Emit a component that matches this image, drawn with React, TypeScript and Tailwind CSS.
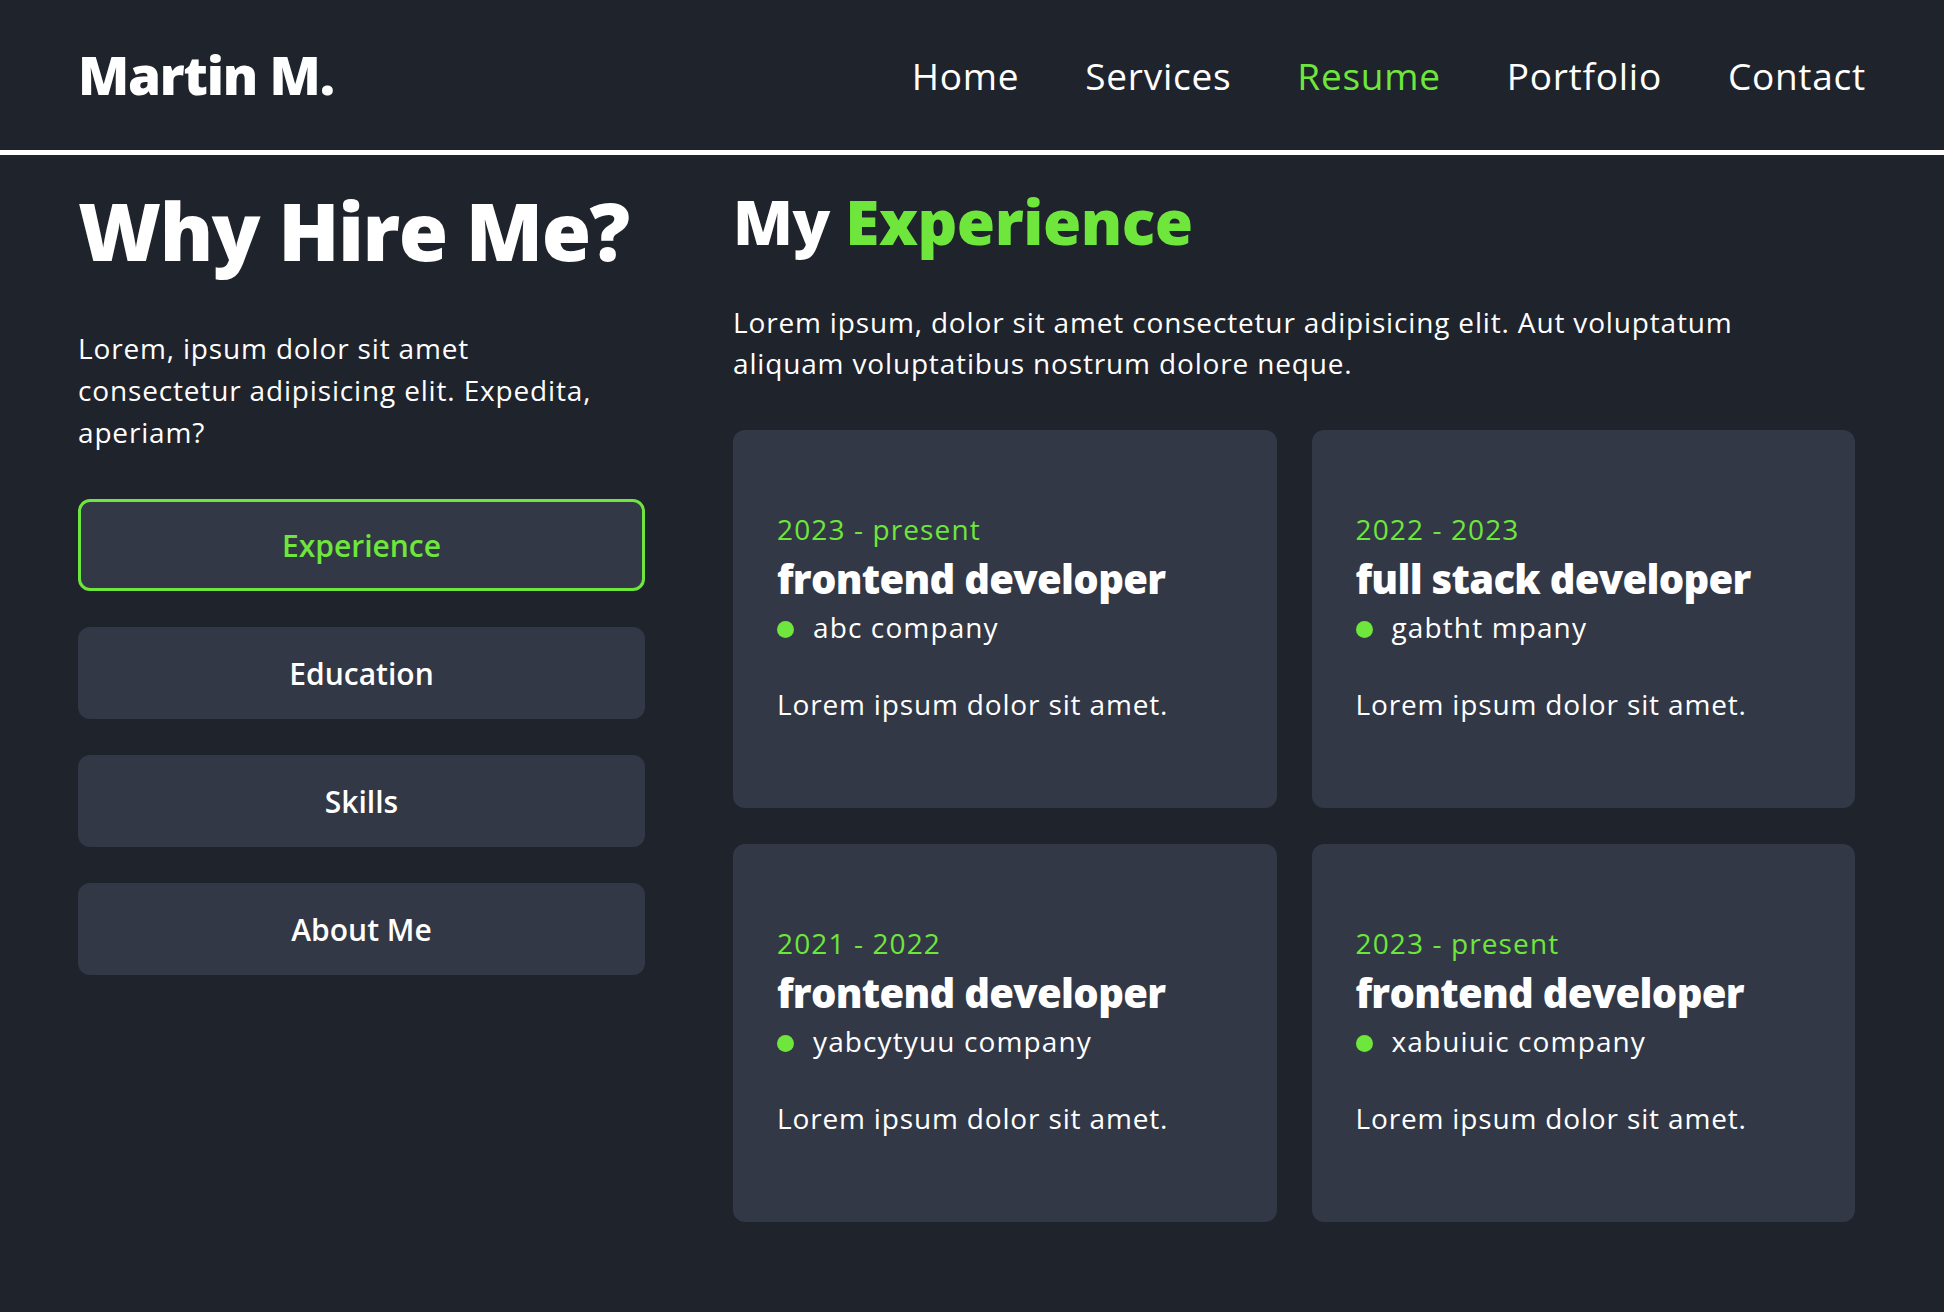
import React from "react";

const jobs = [
  { date: "2023 - present", title: "frontend developer", company: "abc company" },
  { date: "2022 - 2023", title: "full stack developer", company: "gabtht mpany" },
  { date: "2021 - 2022", title: "frontend developer", company: "yabcytyuu company" },
  { date: "2023 - present", title: "frontend developer", company: "xabuiuic company" },
];

const tabs = ["Experience", "Education", "Skills", "About Me"];

export default function App() {
  return (
    <div className="min-h-[1312px] w-full bg-[#1f232c] text-white font-['Open_Sans',sans-serif]">
      <header className="h-[155px] border-b-[5px] border-white flex items-center justify-between pl-[78px] pr-[78px]">
        <div className="text-[53px] leading-none font-extrabold tracking-[-1.2px] -mt-[2px]">Martin M.</div>
        <nav className="flex gap-[66px] text-[37px] leading-none tracking-[0.02em]">
          <a className="text-white">Home</a>
          <a className="text-white">Services</a>
          <a className="text-[#6fe63b]">Resume</a>
          <a className="text-white">Portfolio</a>
          <a className="text-white">Contact</a>
        </nav>
      </header>

      <main className="flex gap-[88px] pl-[78px] pr-[89px] pt-[35px]">
        <section className="w-[567px] shrink-0">
          <h1 className="text-[80px] leading-none font-extrabold tracking-[-1.5px]">Why Hire Me?</h1>
          <p className="mt-[57px] text-[28px] leading-[42px] tracking-[0.03em]">
            Lorem, ipsum dolor sit amet
            <br />
            consectetur adipisicing elit. Expedita,
            <br />
            aperiam?
          </p>
          <div className="mt-[46px] flex flex-col gap-[36px]">
            {tabs.map((t, i) =>
              i === 0 ? (
                <button
                  key={t}
                  className="h-[92px] w-full rounded-[12px] border-[3px] border-[#6fe63b] bg-[#323846] text-[#6fe63b] text-[30px] font-semibold"
                >
                  {t}
                </button>
              ) : (
                <button
                  key={t}
                  className="h-[92px] w-full rounded-[12px] bg-[#323846] text-white text-[30px] font-semibold"
                >
                  {t}
                </button>
              )
            )}
          </div>
        </section>

        <section className="flex-1">
          <h2 className="text-[62px] leading-none font-extrabold tracking-[-0.5px]">
            My <span className="text-[#6fe63b]">Experience</span>
          </h2>
          <p className="mt-[50px] text-[28px] leading-[41px] tracking-[0.03em]">
            Lorem ipsum, dolor sit amet consectetur adipisicing elit. Aut voluptatum
            <br />
            aliquam voluptatibus nostrum dolore neque.
          </p>
          <div className="mt-[46px] grid grid-cols-2 gap-x-[35px] gap-y-[36px]">
            {jobs.map((j, i) => (
              <div key={i} className="h-[378px] rounded-[12px] bg-[#323846] pl-[44px] pt-[79px]">
                <div className="text-[28px] leading-[40px] tracking-[0.04em] text-[#6fe63b]">{j.date}</div>
                <div className="mt-[2px] text-[40px] leading-[56px] font-extrabold tracking-[-0.7px]">{j.title}</div>
                <div className="mt-[1px] flex items-center gap-[19px] text-[28px] leading-[38px] tracking-[0.04em]">
                  <span className="mt-[4px] h-[17px] w-[17px] rounded-full bg-[#6fe63b]" />
                  <span>{j.company}</span>
                </div>
                <div className="mt-[38px] text-[28px] leading-[40px] tracking-[0.03em]">Lorem ipsum dolor sit amet.</div>
              </div>
            ))}
          </div>
        </section>
      </main>
    </div>
  );
}
